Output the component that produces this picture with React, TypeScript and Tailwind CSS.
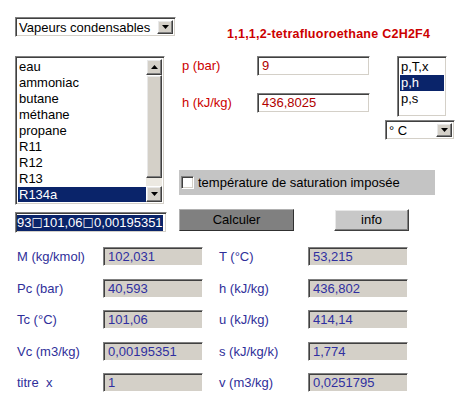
import React from "react";

const sunken =
  "border border-t-[#808080] border-l-[#808080] border-r-white border-b-white shadow-[inset_1px_1px_0_#404040,inset_-1px_-1px_0_#d4d0c8]";
const raised =
  "border border-t-white border-l-white border-r-[#404040] border-b-[#404040] shadow-[inset_-1px_-1px_0_#808080,inset_1px_1px_0_#e8e8e8]";

function Arrow({ up = false }: { up?: boolean }) {
  return (
    <svg width="7" height="4" viewBox="0 0 7 4" className="block">
      {up ? <polygon points="3.5,0 7,4 0,4" fill="#000" /> : <polygon points="0,0 7,0 3.5,4" fill="#000" />}
    </svg>
  );
}

function ArrowButton({ up = false, className = "" }: { up?: boolean; className?: string }) {
  return (
    <div className={`bg-[#d4d0c8] flex items-center justify-center ${raised} ${className}`}>
      <Arrow up={up} />
    </div>
  );
}

function Choice({ label, className }: { label: string; className: string }) {
  return (
    <div className={`bg-white flex items-stretch p-[2px] shrink-0 ${sunken} ${className}`}>
      <div className="flex-1 flex items-center pl-[1px] leading-none text-black">{label}</div>
      <ArrowButton className="w-[16px]" />
    </div>
  );
}

const fluids = ["eau", "ammoniac", "butane", "méthane", "propane", "R11", "R12", "R13", "R134a", "R22"];

function FluidList() {
  return (
    <div className={`bg-white w-[150px] h-[149px] flex p-[2px] ${sunken}`}>
      <div className="flex-1 overflow-hidden">
        {fluids.map((f) => (
          <div
            key={f}
            className={`h-[16px] leading-[16px] pl-[1px] ${f === "R134a" ? "bg-[#0a246a] text-white" : "text-black"}`}
          >
            {f}
          </div>
        ))}
      </div>
      <div className="w-[16px] flex flex-col">
        <ArrowButton up className="h-[16px]" />
        <div className={`h-[103px] bg-[#d4d0c8] ${raised}`} />
        <div className="flex-1 bg-[#ece9e2]" />
        <ArrowButton className="h-[16px]" />
      </div>
    </div>
  );
}

function Field({ value, className = "" }: { value: string; className?: string }) {
  return (
    <div className={`bg-white h-[20px] flex items-center pl-[4px] text-[#b00000] ${sunken} ${className}`}>
      {value}
    </div>
  );
}

function Result({ value }: { value: string }) {
  return (
    <div className={`bg-[#d4d0c8] w-[100px] h-[19px] flex items-center pl-[4px] text-[#2f2fa0] ${sunken}`}>
      {value}
    </div>
  );
}

// separator glyph shown between the copied values
function Sep() {
  return (
    <span className="font-['DejaVu_Sans',sans-serif] text-[12px] relative top-[-1px]">□</span>
  );
}

const left = [
  ["M (kg/kmol)", "102,031"],
  ["Pc (bar)", "40,593"],
  ["Tc (°C)", "101,06"],
  ["Vc (m3/kg)", "0,00195351"],
  ["titre\u00a0\u00a0x", "1"],
];
const right = [
  ["T (°C)", "53,215"],
  ["h (kJ/kg)", "436,802"],
  ["u (kJ/kg)", "414,14"],
  ["s (kJ/kg/k)", "1,774"],
  ["v (m3/kg)", "0,0251795"],
];

export default function App() {
  return (
    <div className="w-[462px] h-[406px] bg-white overflow-hidden text-[13px] font-['Liberation_Sans',Arial,sans-serif]">
      {/* fluid family + fluid name */}
      <div className="flex items-start h-[37px] pt-[17px] pl-[15px]">
        <Choice label="Vapeurs condensables" className="w-[161px] h-[20px]" />
        <div className="ml-[51px] mt-[11px] text-[12.5px] font-bold leading-none tracking-[0.25px] text-[#cc0000] whitespace-nowrap">
          1,1,1,2-tetrafluoroethane C2H2F4
        </div>
      </div>

      <div className="flex pl-[15px] mt-[19px]">
        <div className="w-[164px] flex flex-col">
          <FluidList />
          <div className={`mt-[7px] w-[152px] h-[21px] bg-white flex items-center pl-[1px] ${sunken}`}>
            <span className="bg-[#0a246a] text-white leading-[16px] whitespace-nowrap">
              93<Sep />101,06<Sep />0,00195351
            </span>
          </div>
        </div>

        <div className="flex flex-col">
          <div className="flex h-[84px]">
            <div className="w-[206px] flex flex-col gap-[17px]">
              <div className="flex items-center">
                <span className="w-[78px] pl-[3px] text-[#cc0000]">p (bar)</span>
                <Field value="9" className="w-[113px]" />
              </div>
              <div className="flex items-center">
                <span className="w-[78px] pl-[3px] text-[#cc0000]">h (kJ/kg)</span>
                <Field value="436,8025" className="w-[113px]" />
              </div>
            </div>
            <div className="flex flex-col items-start">
              <div className={`ml-[12px] w-[50px] h-[62px] bg-white p-[2px] ${sunken}`}>
                {["p,T,x", "p,h", "p,s"].map((m) => (
                  <div
                    key={m}
                    className={`h-[16px] leading-[16px] pl-[1px] ${m === "p,h" ? "bg-[#0a246a] text-white" : "text-black"}`}
                  >
                    {m}
                  </div>
                ))}
              </div>
              <Choice label="° C" className="mt-[3px] w-[70px] h-[20px]" />
            </div>
          </div>

          <div className="mt-[30px] w-[256px] h-[25px] bg-[#c4c4c4] flex items-center pl-[2px]">
            <div className={`w-[13px] h-[13px] bg-white ${sunken}`} />
            <span className="ml-[4px] text-black">température de saturation imposée</span>
          </div>

          <div className="mt-[14px] flex">
            <div className="w-[115px] h-[22px] bg-[#808080] flex items-center justify-center text-black border border-t-[#b0b0b0] border-l-[#b0b0b0] border-r-[#303030] border-b-[#303030]">
              Calculer
            </div>
            <div className={`ml-[40px] w-[75px] h-[22px] bg-[#c8c8c8] flex items-center justify-center text-black ${raised}`}>
              info
            </div>
          </div>
        </div>
      </div>

      {/* computed properties */}
      <div className="mt-[14px] pl-[17px] flex flex-col gap-[12px]">
        {left.map(([l, v], i) => (
          <div key={l} className="flex items-center">
            <span className="w-[86px] text-[#2f2f9a]">{l}</span>
            <Result value={v} />
            <span className="ml-[16px] w-[89px] text-[#2f2f9a]">{right[i][0]}</span>
            <Result value={right[i][1]} />
          </div>
        ))}
      </div>
    </div>
  );
}
